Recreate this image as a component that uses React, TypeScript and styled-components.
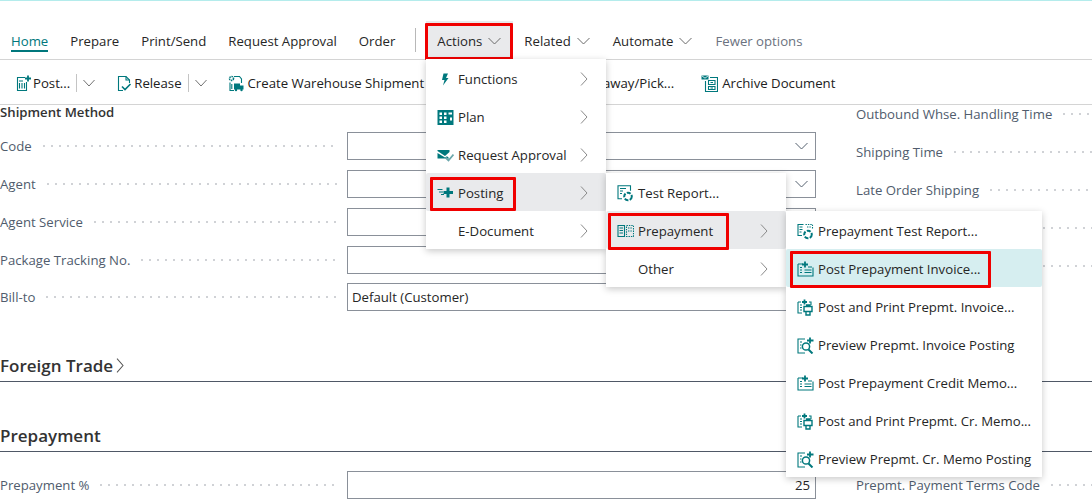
import React from 'react';
import styled, { createGlobalStyle } from 'styled-components';

const TEAL = '#00787d';

const GlobalStyle = createGlobalStyle`
  html, body {
    margin: 0;
    padding: 0;
    background: #fff;
  }
  body {
    font-family: "Open Sans", "Noto Sans", sans-serif;
    font-size: 13.2px;
    color: #212121;
  }
`;

const Svg: React.FC<{ children: React.ReactNode }> = ({ children }) => (
  <svg width="17" height="17" viewBox="0 0 17 17" fill="none" stroke={TEAL} strokeWidth="1.1">
    {children}
  </svg>
);

const Down: React.FC<{ w?: number }> = ({ w = 13 }) => (
  <svg width={w} height="8" viewBox="0 0 13 8" fill="none" stroke="currentColor" strokeWidth="1" preserveAspectRatio="none">
    <path d="M.5 1l6 6 6-6" />
  </svg>
);

const Right: React.FC<{ h?: number }> = ({ h = 14 }) => (
  <svg width="8" height={h} viewBox="0 0 8 14" fill="none" stroke="currentColor" strokeWidth="1" preserveAspectRatio="none">
    <path d="M1 .5l6 6.5-6 6.5" />
  </svg>
);

const PostIcon = () => (
  <Svg>
    <path d="M10 2.5H2.5v13h9V7" />
    <path d="M4.5 8v5.5M7 8v5.5M9.5 8v5.5M4 6h4" />
    <path d="M13 .5v6M10 3.5h6" strokeWidth="1.8" />
  </Svg>
);
const ReleaseIcon = () => (
  <Svg>
    <path d="M7 15.5H2.5v-14H10l3.5 3.5v3" />
    <path d="M10 1.5V5h3.5" />
    <path d="M6 11.5l3 3 5.5-5.5" strokeWidth="1.6" />
  </Svg>
);
const ShipmentIcon = () => (
  <Svg>
    <circle cx="3.5" cy="3.5" r="2" strokeWidth="1.6" strokeDasharray="1.4 .7" />
    <path d="M6 1.5h5.5l2 2.5v4M2 7.5v8h4" />
    <path d="M3.8 9v5" />
    <path d="M6 8.5h6v6H6zM12 10.5h3.5v4H12z" fill={TEAL} stroke="none" />
    <circle cx="8" cy="15" r="1.2" fill={TEAL} stroke="none" />
    <circle cx="13.5" cy="15" r="1.2" fill={TEAL} stroke="none" />
  </Svg>
);
const ArchiveIcon = () => (
  <Svg>
    <path d="M.5 .5h7v4h-7z" fill={TEAL} stroke="none" />
    <path d="M.8 .8l3.2 2.4 3.2-2.4" stroke="#fff" strokeWidth=".8" />
    <path d="M4.5 6v10.5h12V2.5H9" />
    <path d="M7.5 5.5h6.5v4H7.5zM7.5 11.5h6.5v3H7.5zM9.5 7.5h2.5M9.5 13h2.5" />
  </Svg>
);
const FunctionsIcon = () => (
  <Svg>
    <path d="M6.5 2.5h4.5L9 7h2.5l-5.5 7.5L7.5 9H5z" fill={TEAL} stroke="none" />
  </Svg>
);
const PlanIcon = () => (
  <Svg>
    <path d="M.5 1h16v15H.5z" fill={TEAL} stroke="none" />
    <path
      d="M2.5 3.5h2.5v2.5H2.5zM7 3.5h2.5v2.5H7zM2.5 7.5h2.5V10H2.5zM7 7.5h2.5V10H7zM2.5 11.5h2.5V14H2.5zM7 11.5h2.5V14H7zM11.5 3.5h3.5v2h-3.5zM13 8.5h2v3h-2z"
      fill="#fff"
      stroke="none"
    />
  </Svg>
);
const ApprovalIcon = () => (
  <Svg>
    <path d="M.5 3h12v2L8 9 .5 4zM.5 6l7.5 4.5 2-1.2 2.5 2.2H.5z" fill={TEAL} stroke="none" />
    <path d="M8.5 10.5l3 3 5-6" stroke="#6aa7ab" strokeWidth="1.8" />
  </Svg>
);
const PostingIcon = () => (
  <Svg>
    <path d="M.5 4.5h5M2 7h4M4 9.5h3" />
    <path d="M11 2.5v10M6.5 7.5h9.5" strokeWidth="3" />
  </Svg>
);
const TestReportIcon = () => (
  <Svg>
    <path d="M7 .8H1v13h4M7 .8h6.5v5" />
    <path d="M3 3.5h6M3 6h3M3 8.5h2" />
    <circle cx="11" cy="11.5" r="3.8" strokeWidth="2" strokeDasharray="4 1.4" />
  </Svg>
);
const PrepaymentTestIcon = () => (
  <Svg>
    <path d="M6.5 1.5H1v11h4M2.5 4h3M2.5 6.5h3M2.5 9h2" />
    <path d="M8.5 1.5h7v4M10 4h4" strokeDasharray="1.4 1" />
    <circle cx="11" cy="11.5" r="3.8" strokeWidth="2" strokeDasharray="4 1.4" />
  </Svg>
);
const PrepaymentIcon = () => (
  <Svg>
    <path d="M1 2.5h6.5v11H1zM2.5 5h3.5M2.5 7.5h3.5M2.5 10h3.5" />
    <path d="M9.5 2.5h7v11h-7zM11 5h4M11 8h4" strokeDasharray="1.4 1" />
  </Svg>
);
const PostInvoiceIcon = () => (
  <Svg>
    <path d="M1 3h5M1 3v12h15V6.5" />
    <path d="M3 6.5h2M3 9h2M3 11.5h2M7.5 9h7M7.5 11.5h7M11 6h4" />
    <path d="M8 .5v6M5 3.5h6" strokeWidth="1.8" />
  </Svg>
);
const PrintIcon = () => (
  <Svg>
    <path d="M1 3h3M1 3v11h4M12 3h2v3" />
    <path d="M3 6h2M3 8.5h2M3 11h2" />
    <path d="M7.5 .5v5M5 3h5" strokeWidth="1.8" />
    <path d="M7 7.5h8v5H7zM9 6h4v1.5M9 12.5h4V16H9z" strokeWidth="1.4" />
  </Svg>
);
const PreviewIcon = () => (
  <Svg>
    <path d="M8 2H1v14h7" />
    <path d="M3 5h2M3 8h1.5M3 11h1.5" />
    <circle cx="9" cy="9.5" r="3.6" strokeWidth="1.5" />
    <path d="M11.5 12.5l4 4" strokeWidth="2" />
    <path d="M13 .5v6M10 3.5h6.5" strokeWidth="1.8" />
  </Svg>
);

const Page = styled.div`
  position: relative;
  width: 1092px;
  height: 500px;
  overflow: hidden;
  border-top: 1px solid #b4ecec;
  box-sizing: border-box;
`;

const TabBar = styled.nav`
  display: flex;
  align-items: center;
  height: 38px;
  margin-top: 20px;
  border-bottom: 1px solid #d4d4d4;
`;

const Tab = styled.div<{ $active?: boolean; $muted?: boolean; $open?: boolean; $menu?: boolean }>`
  position: relative;
  display: flex;
  align-items: center;
  gap: 6px;
  height: 100%;
  padding: 2px ${({ $menu }) => ($menu ? 12 : 11)}px 0 11px;
  box-sizing: border-box;
  white-space: nowrap;
  color: ${({ $active, $muted }) => ($active ? '#00777c' : $muted ? '#6b7280' : '#262626')};
  background: ${({ $open }) => ($open ? '#e9eaec' : 'transparent')};

  svg {
    color: #6b6b6b;
  }
`;

const Underline = styled.span`
  position: absolute;
  left: 11px;
  right: 11px;
  bottom: 7px;
  height: 2px;
  background: #00777c;
`;

const TabDivider = styled.span`
  width: 1px;
  height: 24px;
  margin: 0 10px 0 9px;
  background: #b8b8b8;
`;

const ToolBar = styled.div`
  display: flex;
  align-items: center;
  height: 42px;
  padding: 2px 0 0 15px;
  border-bottom: 1px solid #d4d4d4;
`;

const ToolItem = styled.div<{ $gap?: number; $iconGap?: number }>`
  display: flex;
  align-items: center;
  gap: ${({ $iconGap }) => $iconGap ?? 1}px;
  margin-right: ${({ $gap }) => $gap ?? 24}px;
  white-space: nowrap;

  svg {
    flex: none;
  }
`;

const SplitChevron = styled.span`
  display: flex;
  align-items: center;
  height: 18px;
  margin-left: 5px;
  padding-left: 6px;
  border-left: 1px solid #c4c4c4;
  color: #6b6b6b;
`;

const Columns = styled.section`
  display: grid;
  grid-template-columns: 816px 1fr;
  column-gap: 40px;
`;

const LeftColumn = styled.div`
  display: flex;
  flex-direction: column;
  gap: 10px;
`;

const RightColumn = styled.div`
  display: flex;
  flex-direction: column;
  overflow: hidden;
`;

const GroupTitle = styled.div`
  height: 17px;
  font-weight: 600;
  line-height: 14px;
  color: #333;
`;

const Row = styled.div<{ $tight?: boolean }>`
  display: flex;
  align-items: center;
  height: 28px;
  margin-top: ${({ $tight }) => ($tight ? -1 : 0)}px;
`;

const Label = styled.div`
  flex: none;
  display: flex;
  align-items: center;
  width: 338px;
  margin-right: 9px;
  color: #505c6d;
  white-space: nowrap;
`;

const Leader = styled.span`
  flex: 1;
  height: 2px;
  margin-left: 8px;
  background-image: radial-gradient(circle, #d0d2d6 1px, transparent 1px);
  background-size: 8px 2px;
`;

const SideRow = styled.div<{ $pad?: number }>`
  display: flex;
  align-items: flex-start;
  height: 38px;
  padding-top: ${({ $pad }) => $pad ?? 0}px;
  box-sizing: border-box;
  color: #505c6d;
  line-height: 18px;
  white-space: nowrap;
  overflow: hidden;
`;

const SideLeader = styled(Leader)`
  margin-top: 8px;
`;

const Field = styled.div<{ $right?: boolean }>`
  flex: 1;
  display: flex;
  align-items: center;
  justify-content: ${({ $right }) => ($right ? 'flex-end' : 'space-between')};
  height: 28px;
  padding: 0 7px 0 4px;
  box-sizing: border-box;
  border: 1px solid #8a9099;
  color: #262626;

  svg {
    color: #55606e;
  }
`;

const NumberField = styled(Field)`
  padding-right: 5px;
`;

const SectionHeading = styled.h2`
  display: flex;
  align-items: center;
  gap: 3px;
  height: 25px;
  margin: 41px 0 0;
  padding-bottom: 3px;
  border-bottom: 1px solid #4f5866;
  font-size: 17px;
  font-weight: 600;
  color: #333;

  svg {
    color: #555;
  }
`;

const FirstHeading = styled(SectionHeading)`
  margin-top: 42px;
`;

const PrepaymentColumns = styled(Columns)`
  margin-top: 19px;
`;

const Menu = styled.div<{ $left: number; $top: number; $width: number }>`
  position: absolute;
  left: ${({ $left }) => $left}px;
  top: ${({ $top }) => $top}px;
  width: ${({ $width }) => $width}px;
  background: #fff;
  box-shadow: 0 2px 7px rgba(0, 0, 0, 0.22);
`;

const MenuItem = styled.div<{ $tone?: 'open' | 'selected' }>`
  position: relative;
  display: flex;
  align-items: center;
  height: 38px;
  padding: 2px 0 0 11px;
  box-sizing: border-box;
  color: #262626;
  white-space: nowrap;
  border-radius: 2px;
  background: ${({ $tone }) =>
    $tone === 'open' ? '#e9eaec' : $tone === 'selected' ? '#d6eef0' : 'transparent'};
`;

const MenuIcon = styled.span`
  flex: none;
  display: flex;
  width: 21px;
`;

const MenuArrow = styled.span`
  position: absolute;
  right: 18px;
  display: flex;
  color: #8a8a8a;
`;

const Callout = styled.span<{ $left: number; $top: number; $width: number; $height: number }>`
  position: absolute;
  left: ${({ $left }) => $left}px;
  top: ${({ $top }) => $top}px;
  width: ${({ $width }) => $width}px;
  height: ${({ $height }) => $height}px;
  box-sizing: border-box;
  border: 3px solid #f00000;
  border-radius: 1px;
  pointer-events: none;
`;

const tabs = ['Prepare', 'Print/Send', 'Request Approval', 'Order'];
const sideRows = ['Outbound Whse. Handling Time', 'Shipping Time', 'Late Order Shipping', '', ''];

const firstMenu = [
  { icon: <FunctionsIcon />, label: 'Functions', arrow: true },
  { icon: <PlanIcon />, label: 'Plan', arrow: true },
  { icon: <ApprovalIcon />, label: 'Request Approval', arrow: true },
  { icon: <PostingIcon />, label: 'Posting', arrow: true, open: true },
  { icon: null, label: 'E-Document', arrow: true },
];

const secondMenu = [
  { icon: <TestReportIcon />, label: 'Test Report...' },
  { icon: <PrepaymentIcon />, label: 'Prepayment', arrow: true, open: true },
  { icon: null, label: 'Other', arrow: true },
];

const thirdMenu = [
  { icon: <PrepaymentTestIcon />, label: 'Prepayment Test Report...' },
  { icon: <PostInvoiceIcon />, label: 'Post Prepayment Invoice...', selected: true },
  { icon: <PrintIcon />, label: 'Post and Print Prepmt. Invoice...' },
  { icon: <PreviewIcon />, label: 'Preview Prepmt. Invoice Posting' },
  { icon: <PostInvoiceIcon />, label: 'Post Prepayment Credit Memo...' },
  { icon: <PrintIcon />, label: 'Post and Print Prepmt. Cr. Memo...' },
  { icon: <PreviewIcon />, label: 'Preview Prepmt. Cr. Memo Posting' },
];

const App: React.FC = () => {
  return (
    <Page>
      <GlobalStyle />
      <TabBar>
        <Tab $active>
          Home
          <Underline />
        </Tab>
        {tabs.map((t) => (
          <Tab key={t}>{t}</Tab>
        ))}
        <TabDivider />
        <Tab $open $menu>
          Actions <Down />
          <Callout $left={-1} $top={2} $width={88} $height={37} />
        </Tab>
        <Tab $menu>
          Related <Down />
        </Tab>
        <Tab $menu>
          Automate <Down />
        </Tab>
        <Tab $muted>Fewer options</Tab>
      </TabBar>

      <ToolBar>
        <ToolItem $gap={21}>
          <PostIcon /> Post...
          <SplitChevron>
            <Down w={12} />
          </SplitChevron>
        </ToolItem>
        <ToolItem $gap={21}>
          <ReleaseIcon /> Release
          <SplitChevron>
            <Down w={12} />
          </SplitChevron>
        </ToolItem>
        <ToolItem $iconGap={3} $gap={28}>
          <ShipmentIcon /> Create Warehouse Shipment
        </ToolItem>
        <ToolItem $iconGap={3} $gap={27}>
          <ShipmentIcon /> Create Inventory Put-away/Pick...
        </ToolItem>
        <ToolItem $iconGap={4}>
          <ArchiveIcon /> Archive Document
        </ToolItem>
      </ToolBar>

      <Columns>
        <LeftColumn>
          <GroupTitle>Shipment Method</GroupTitle>
          <Row>
            <Label>
              Code
              <Leader />
            </Label>
            <Field>
              <span />
              <Down />
            </Field>
          </Row>
          <Row>
            <Label>
              Agent
              <Leader />
            </Label>
            <Field>
              <span />
              <Down />
            </Field>
          </Row>
          <Row>
            <Label>
              Agent Service
              <Leader />
            </Label>
            <Field />
          </Row>
          <Row>
            <Label>
              Package Tracking No.
              <Leader />
            </Label>
            <Field />
          </Row>
          <Row $tight>
            <Label>
              Bill-to
              <Leader />
            </Label>
            <Field>Default (Customer)</Field>
          </Row>
        </LeftColumn>
        <RightColumn>
          {sideRows.map((label, i) => (
            <SideRow key={i}>
              {label}
              <SideLeader />
            </SideRow>
          ))}
        </RightColumn>
      </Columns>

      <FirstHeading>
        Foreign Trade
        <Right h={15} />
      </FirstHeading>
      <SectionHeading>Prepayment</SectionHeading>

      <PrepaymentColumns>
        <Row>
          <Label>
            Prepayment %
            <Leader />
          </Label>
          <NumberField $right>25</NumberField>
        </Row>
        <SideRow $pad={5}>
          Prepmt. Payment Terms Code
          <SideLeader />
        </SideRow>
      </PrepaymentColumns>

      <Menu $left={426} $top={58} $width={180}>
        {firstMenu.map((m) => (
          <MenuItem key={m.label} $tone={m.open ? 'open' : undefined}>
            <MenuIcon>{m.icon}</MenuIcon>
            {m.label}
            <MenuArrow>
              <Right />
            </MenuArrow>
            {m.open && <Callout $left={4} $top={4} $width={86} $height={34} />}
          </MenuItem>
        ))}
      </Menu>
      <Menu $left={606} $top={172} $width={180}>
        {secondMenu.map((m) => (
          <MenuItem key={m.label} $tone={m.open ? 'open' : undefined}>
            <MenuIcon>{m.icon}</MenuIcon>
            {m.label}
            {m.arrow && (
              <MenuArrow>
                <Right />
              </MenuArrow>
            )}
            {m.open && <Callout $left={2} $top={2} $width={121} $height={37} />}
          </MenuItem>
        ))}
      </Menu>
      <Menu $left={786} $top={210} $width={256}>
        {thirdMenu.map((m) => (
          <MenuItem key={m.label} $tone={m.selected ? 'selected' : undefined}>
            <MenuIcon>{m.icon}</MenuIcon>
            {m.label}
            {m.selected && <Callout $left={4} $top={2} $width={201} $height={37} />}
          </MenuItem>
        ))}
      </Menu>
    </Page>
  );
};

export default App;
